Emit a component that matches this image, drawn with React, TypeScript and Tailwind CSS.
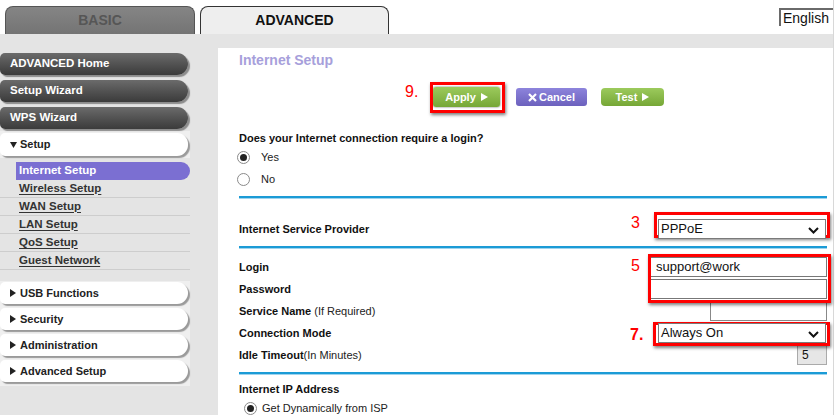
import React from 'react';

const darkItems = ['ADVANCED Home', 'Setup Wizard', 'WPS Wizard'];
const subItems = ['Wireless Setup', 'WAN Setup', 'LAN Setup', 'QoS Setup', 'Guest Network'];
const groupItems = ['USB Functions', 'Security', 'Administration', 'Advanced Setup'];

function Tri({ down = false, color = '#222' }: { down?: boolean; color?: string }) {
  return down ? (
    <svg width="7" height="6" viewBox="0 0 7 6" className="mr-[3px]">
      <path d="M0 0h7L3.5 6z" fill={color} />
    </svg>
  ) : (
    <svg width="6" height="8" viewBox="0 0 6 8" className="mr-[4px]">
      <path d="M0 0l6 4-6 4z" fill={color} />
    </svg>
  );
}

function Chevron() {
  return (
    <svg width="11" height="7" viewBox="0 0 11 7" className="absolute right-[6px] top-[7px]">
      <path d="M1 1l4.5 4.5L10 1" stroke="#111" strokeWidth="2" fill="none" />
    </svg>
  );
}

function Radio({ checked }: { checked?: boolean }) {
  return (
    <span className="inline-flex h-[13px] w-[13px] items-center justify-center rounded-full border border-[#8a8a8a] bg-white">
      {checked && <span className="h-[7px] w-[7px] rounded-full bg-[#222]" />}
    </span>
  );
}

function RedBox({ className }: { className: string }) {
  return (
    <div
      className={`pointer-events-none absolute border-[3px] border-[#f00] shadow-[1px_2px_3px_rgba(0,0,0,0.5)] ${className}`}
    />
  );
}

function Mark({ text, className }: { text: string; className: string }) {
  return <span className={`absolute text-[16px] leading-[18px] text-[#f00] ${className}`}>{text}</span>;
}

function Row({ label, note, children }: { label: string; note?: string; children?: React.ReactNode }) {
  return (
    <div className="flex h-[22px] items-center justify-between">
      <span className="text-[11px] font-bold text-[#111]">
        {label}
        {note && <span className="font-normal text-[#222]">{note}</span>}
      </span>
      {children}
    </div>
  );
}

function BlueLine() {
  return <div className="h-[2px] bg-[#1b9bd6] shadow-[0_1px_0_#9fd4ee]" />;
}

function Sidebar() {
  return (
    <div className="w-[218px] shrink-0 pt-[19px]">
      <div className="flex flex-col gap-[5px]">
        {darkItems.map((t) => (
          <div
            key={t}
            className="flex h-[22px] w-[188px] items-center rounded-l-[5px] rounded-r-[11px] bg-linear-to-b from-[#6b6b6b] to-[#3b3b3b] pl-[10px] text-[11.5px] font-bold text-white shadow-[2px_2px_1px_#8c8c8c]"
          >
            {t}
          </div>
        ))}
      </div>
      <div className="mt-[2px] w-[190px] bg-[#efefef] py-[2px]">
        <div className="flex h-[23px] w-[188px] items-center rounded-l-[5px] rounded-r-[11px] bg-white pl-[10px] text-[11px] font-bold text-[#222] shadow-[2px_2px_1px_#9a9a9a]">
          <Tri down />
          Setup
        </div>
      </div>
      <div className="mt-[4px] w-[190px]">
        <div className="ml-[16px] flex h-[18px] w-[174px] items-center rounded-r-[9px] bg-[#7b6fd2] pl-[3px] text-[11.5px] font-bold text-white">
          Internet Setup
        </div>
        {subItems.map((t) => (
          <div key={t} className="flex h-[18px] items-center border-b border-[#cdcdcd] pl-[19px]">
            <span className="text-[11.5px] font-bold text-[#333] underline underline-offset-[2px]">{t}</span>
          </div>
        ))}
      </div>
      <div className="mt-[11px] flex w-[190px] flex-col gap-[4px] bg-[#efefef] py-[1px] pb-[4px]">
        {groupItems.map((t) => (
          <div
            key={t}
            className="flex h-[22px] w-[188px] items-center rounded-l-[5px] rounded-r-[11px] bg-white pl-[10px] text-[11px] font-bold text-[#222] shadow-[2px_2px_1px_#9a9a9a]"
          >
            <Tri />
            {t}
          </div>
        ))}
      </div>
    </div>
  );
}

function Content() {
  return (
    <div className="mt-[14px] flex-1 bg-white pl-[21px] pr-[6px]">
      <div className="pt-[4px] text-[14px] font-bold leading-[16px] text-[#a79fdb]">Internet Setup</div>

      <div className="mt-[13px] flex h-[32px] items-center pl-[194px]">
        <div className="relative">
          <Mark text="9." className="-left-[28px] -top-[4px]" />
          <RedBox className="-left-[3px] -right-[5px] -top-[5px] -bottom-[6px]" />
          <div className="flex h-[20px] w-[67px] items-center justify-center rounded-[3px] bg-linear-to-b from-[#9cca5c] to-[#76a736] text-[11px] font-bold text-white shadow-[0_0_2px_#555]">
            Apply
            <svg width="7" height="8" viewBox="0 0 7 8" className="ml-[5px]">
              <path d="M0 0l7 4-7 4z" fill="#fff" />
            </svg>
          </div>
        </div>
        <div className="ml-[16px] flex h-[18px] w-[71px] items-center justify-center rounded-[3px] bg-linear-to-b from-[#8d84dc] to-[#6c61bd] text-[11px] font-bold text-white">
          <svg width="9" height="9" viewBox="0 0 9 9" className="mr-[2px]">
            <path d="M1 1l7 7M8 1L1 8" stroke="#fff" strokeWidth="2.2" />
          </svg>
          Cancel
        </div>
        <div className="ml-[14px] flex h-[18px] w-[63px] items-center justify-center rounded-[4px] bg-linear-to-b from-[#9cca5c] to-[#76a736] text-[11px] font-bold text-white">
          Test
          <svg width="7" height="8" viewBox="0 0 7 8" className="ml-[5px]">
            <path d="M0 0l7 4-7 4z" fill="#fff" />
          </svg>
        </div>
      </div>

      <div className="mt-[17px] text-[11px] font-bold leading-[16px] text-[#111]">
        Does your Internet connection require a login?
      </div>
      <div className="flex h-[22px] items-center text-[11px] text-[#222]">
        <span className="-ml-[2px] mr-[11px] flex">
          <Radio checked />
        </span>
        Yes
      </div>
      <div className="flex h-[23px] items-center text-[11px] text-[#222]">
        <span className="-ml-[2px] mr-[11px] flex">
          <Radio />
        </span>
        No
      </div>
      <div className="mt-[5px]">
        <BlueLine />
      </div>

      <div className="flex h-[48px] items-center justify-between pt-[14px]">
        <span className="text-[11px] font-bold text-[#111]">Internet Service Provider</span>
        <div className="relative mr-[1px]">
          <Mark text="3" className="-left-[27px] -top-[5px]" />
          <RedBox className="-left-[4px] -right-[4px] -top-[7px] bottom-[1px]" />
          <div className="relative flex h-[20px] w-[168px] items-center border border-[#7a7a7a] bg-white pl-[2px] text-[13px] text-[#111]">
            PPPoE
            <Chevron />
          </div>
        </div>
      </div>
      <BlueLine />

      <div className="pt-[8px]">
        <Row label="Login">
          <div className="relative">
            <Mark text="5" className="-left-[19px] top-0" />
            <RedBox className="-left-[2px] -right-[4px] -top-[3px] -bottom-[26px]" />
            <div className="flex h-[20px] w-[177px] items-center border border-[#777] bg-white pl-[5px] text-[13px] text-[#111]">
              support@work
            </div>
          </div>
        </Row>
        <Row label="Password">
          <div className="h-[20px] w-[177px] border border-[#777] bg-white" />
        </Row>
        <Row label="Service Name" note=" (If Required)">
          <div className="h-[20px] w-[117px] border border-[#888] bg-white" />
        </Row>
        <Row label="Connection Mode">
          <div className="relative mr-[1px]">
            <Mark text="7." className="-left-[28px] top-[3px] font-bold" />
            <RedBox className="-left-[5px] -right-[4px] -top-[1px] -bottom-[3px]" />
            <div className="relative flex h-[20px] w-[168px] items-center border border-[#7a7a7a] bg-white pl-[2px] text-[13px] text-[#111]">
              Always On
              <Chevron />
            </div>
          </div>
        </Row>
        <Row label="Idle Timeout" note="(In Minutes)">
          <div className="flex h-[20px] w-[30px] items-center border border-[#aaa] bg-[#e6e6e6] pl-[4px] text-[12px] text-[#111]">
            5
          </div>
        </Row>
      </div>
      <div className="mt-[6px]">
        <BlueLine />
      </div>

      <div className="mt-[7px] text-[11px] font-bold leading-[16px] text-[#111]">Internet IP Address</div>
      <div className="flex h-[22px] items-center pl-[5px] text-[11px] text-[#222]">
        <span className="mr-[5px] flex">
          <Radio checked />
        </span>
        Get Dynamically from ISP
      </div>
    </div>
  );
}

export default function App() {
  return (
    <div className="h-[415px] w-[835px] overflow-hidden bg-white font-['Liberation_Sans',Arial,sans-serif]">
      <div className="w-[834px] border-r border-[#d8d8d8]">
        <div className="relative flex h-[34px] items-end bg-white pl-[5px]">
          <div className="flex h-[28px] w-[190px] items-center justify-center rounded-t-[8px] border border-b-0 border-[#555] bg-linear-to-b from-[#858585] to-[#747474] text-[14px] font-bold text-[#565656]">
            BASIC
          </div>
          <div className="ml-[5px] flex h-[28px] w-[189px] items-center justify-center rounded-t-[8px] border border-b-0 border-[#333] bg-[#eeeeee] text-[14px] font-bold text-[#111]">
            ADVANCED
          </div>
          <div className="absolute right-0 top-[8px] flex h-[18px] w-[54px] items-center border-l-2 border-t-2 border-[#6a6a6a] bg-white pl-[2px] text-[14px] text-[#111]">
            English
          </div>
        </div>
        <div className="flex h-[381px] bg-[#e4e4e4]">
          <Sidebar />
          <Content />
        </div>
      </div>
    </div>
  );
}
